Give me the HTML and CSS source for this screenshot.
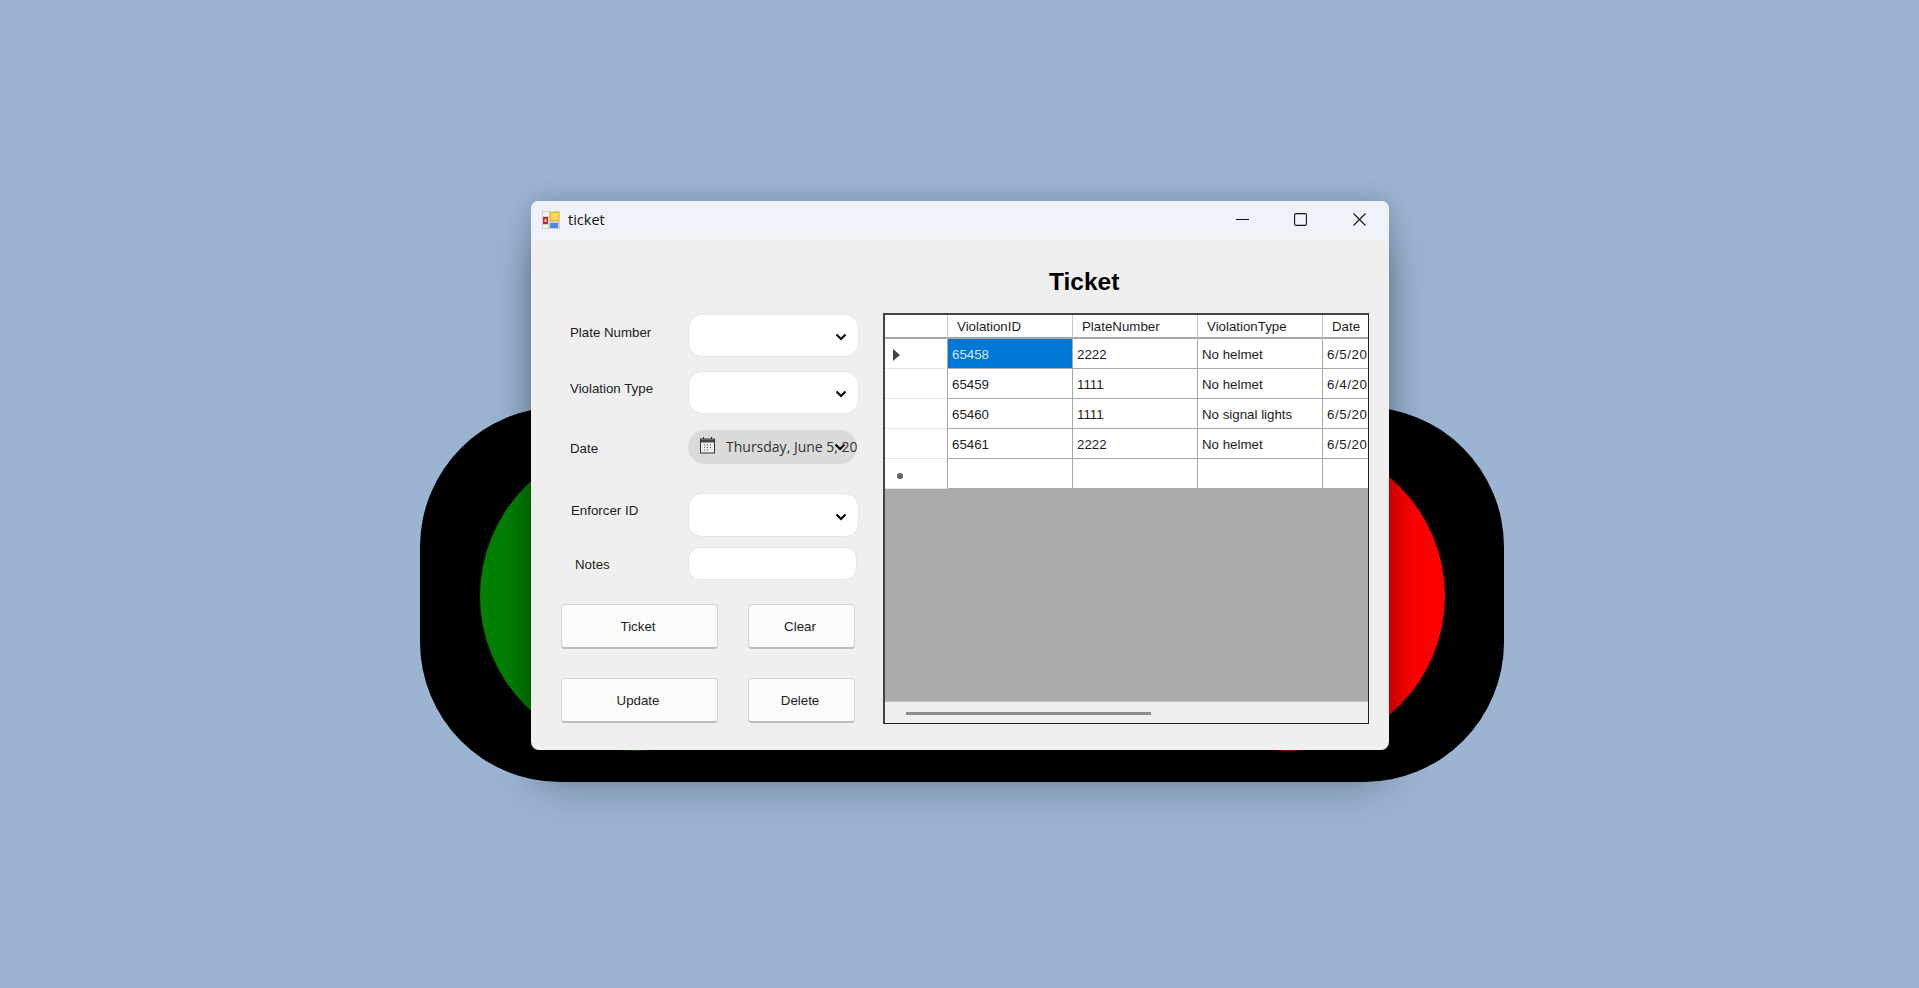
FILE: index.html
```html
<!DOCTYPE html>
<html lang="en">
  <head>
    <meta charset="UTF-8" />
    <title>ticket</title>
    <link rel="stylesheet" href="styles.css">
  </head>
  <body>
    <div class="backdrop">
      <div class="circle circle-green"></div>
      <div class="circle circle-red"></div>
    </div>

    <div class="window">
      <div class="titlebar">
        <svg class="app-icon" width="18" height="18" viewBox="0 0 18 18">
          <rect width="18" height="18" fill="#cfcfcf" />
          <rect x="1" y="1" width="6" height="4" fill="#f4f4f4" />
          <rect x="1" y="6" width="5" height="7" fill="#c8262a" />
          <rect x="2.5" y="8" width="2" height="3" fill="#f2c6c6" />
          <rect x="8" y="1" width="9" height="9" fill="#f0b90f" />
          <rect x="9" y="2" width="7" height="7" fill="#fcd856" />
          <rect x="8" y="12" width="8" height="5" fill="#4d8ce0" />
          <rect x="1" y="14" width="5" height="3" fill="#f4f4f4" />
        </svg>
        <span class="window-title">ticket</span>
        <div class="controls">
          <svg width="13" height="13" viewBox="0 0 13 13"><path d="M0 6.5h13" /></svg>
          <svg width="13" height="13" viewBox="0 0 13 13"><rect x="0.6" y="0.6" width="11.8" height="11.8" rx="1.5" /></svg>
          <svg width="13" height="13" viewBox="0 0 13 13"><path d="M0.5 0.5l12 12M12.5 0.5l-12 12" /></svg>
        </div>
      </div>

      <div class="window-body">
        <form class="ticket-form">
          <div class="row row-plate">
            <label>Plate Number</label>
            <div class="combo">
              <svg class="chevron" width="12" height="8" viewBox="0 0 12 8"><path d="M1.5 1.5L6 6l4.5-4.5" /></svg>
            </div>
          </div>
          <div class="row row-violation">
            <label>Violation Type</label>
            <div class="combo">
              <svg class="chevron" width="12" height="8" viewBox="0 0 12 8"><path d="M1.5 1.5L6 6l4.5-4.5" /></svg>
            </div>
          </div>
          <div class="row row-date">
            <label>Date</label>
            <div class="date-picker">
              <svg class="calendar" width="15" height="17" viewBox="0 0 15 17">
                <path d="M3.5 0v3M11.5 0v3" stroke="#222" fill="none" />
                <rect x="0.5" y="2" width="14" height="14" fill="#eee" stroke="#333" />
                <rect x="1" y="2.5" width="13" height="3" fill="#444" />
                <path d="M4 8h1M7 8h1M10 8h1M4 10.5h1M7 10.5h1M10 10.5h1M4 13h1M7 13h1" stroke="#555" fill="none" />
              </svg>
              <span class="date-text">Thursday, June 5, 2025</span>
              <svg class="chevron" width="12" height="8" viewBox="0 0 12 8"><path d="M1.5 1.5L6 6l4.5-4.5" /></svg>
            </div>
          </div>
          <div class="row row-enforcer">
            <label>Enforcer ID</label>
            <div class="combo">
              <svg class="chevron" width="12" height="8" viewBox="0 0 12 8"><path d="M1.5 1.5L6 6l4.5-4.5" /></svg>
            </div>
          </div>
          <div class="row row-notes">
            <label>Notes</label>
            <input class="notes" type="text" />
          </div>
          <div class="buttons">
            <button type="button">Ticket</button>
            <button type="button">Clear</button>
            <button type="button">Update</button>
            <button type="button">Delete</button>
          </div>
        </form>

        <div class="records">
          <h1>Ticket</h1>
          <div class="grid-view">
            <table>
              <thead>
                <tr><th class="head-cell"></th><th>ViolationID</th><th>PlateNumber</th><th>ViolationType</th><th>Date</th></tr>
              </thead>
              <tbody>
                <tr>
                  <td class="head-cell"><svg width="7" height="12" viewBox="0 0 7 12"><path d="M0 0l7 6-7 6z" fill="#444" /></svg></td>
                  <td class="selected">65458</td><td>2222</td><td>No helmet</td><td>6/5/2025</td>
                </tr>
                <tr><td class="head-cell"></td><td>65459</td><td>1111</td><td>No helmet</td><td>6/4/2025</td></tr>
                <tr><td class="head-cell"></td><td>65460</td><td>1111</td><td>No signal lights</td><td>6/5/2025</td></tr>
                <tr><td class="head-cell"></td><td>65461</td><td>2222</td><td>No helmet</td><td>6/5/2025</td></tr>
                <tr class="new-row">
                  <td class="head-cell"><svg class="new-mark" width="6" height="6" viewBox="0 0 7 7"><path d="M2 0h3l2 2v3l-2 2H2L0 5V2z" fill="#666" /></svg></td>
                  <td></td><td></td><td></td><td></td>
                </tr>
              </tbody>
            </table>
            <div class="empty-area"></div>
            <div class="scrollbar"><div class="thumb"></div></div>
          </div>
        </div>
      </div>
    </div>
  </body>
</html>
```

FILE: styles.css
```css
body {
  margin: 0;
  height: 988px;
  overflow: hidden;
  position: relative;
  background: #9bb4d2;
  font-family: "Liberation Sans", Arial, sans-serif;
  font-size: 13.3px;
  color: #1c1c1c;
}

/* shapes behind the window */
.backdrop {
  position: absolute;
  left: 420px;
  top: 407px;
  width: 1084px;
  height: 375px;
  background: #000;
  border-radius: 140px;
}
.circle {
  position: absolute;
  top: 34px;
  width: 310px;
  height: 310px;
  border-radius: 50%;
}
.circle-green {
  left: 60px;
  background: #008000;
}
.circle-red {
  right: 59px;
  background: #f00;
}

.window {
  position: absolute;
  left: 531px;
  top: 201px;
  width: 858px;
  height: 549px;
  background: #efefef;
  border-radius: 8px;
  overflow: hidden;
  box-shadow: 0 34px 44px -8px rgba(0, 0, 0, 0.45), 0 -2px 24px rgba(0, 0, 0, 0.16);
}
.titlebar {
  height: 38px;
  background: #eff2f9;
  display: flex;
  align-items: center;
  padding-left: 11px;
}
.app-icon {
  margin-top: -1px;
}
.window-title {
  margin-left: 8px;
  margin-top: -1px;
  font-family: "Open Sans", sans-serif;
  font-size: 14.5px;
  color: #111;
}
.controls {
  margin-left: auto;
  margin-right: 23px;
  margin-top: -1px;
  display: flex;
  gap: 45px;
}
.controls svg {
  fill: none;
  stroke: #111;
  stroke-width: 1.1;
}
.controls svg:last-child {
  margin-left: 1px;
}

.window-body {
  display: flex;
  padding-left: 30px;
}

.ticket-form {
  width: 298px;
  padding-top: 75px;
}
.row {
  display: grid;
  grid-template-columns: 127px 1fr;
}
.row label {
  padding-left: 9px;
  line-height: 16px;
}
.row-plate {
  height: 43px;
  margin-bottom: 14px;
}
.row-plate label {
  padding-top: 11px;
}
.row-violation {
  height: 43px;
  margin-bottom: 16px;
}
.row-violation label {
  padding-top: 10px;
}
.row-date {
  height: 34px;
  margin-bottom: 29px;
}
.row-date label {
  padding-top: 11px;
}
.row-enforcer {
  height: 44px;
  margin-bottom: 10px;
}
.row-enforcer label {
  padding-top: 10px;
  padding-left: 10px;
}
.row-notes {
  height: 33px;
  margin-bottom: 24px;
}
.row-notes label {
  padding-top: 10px;
  padding-left: 14px;
}

.combo {
  background: #fff;
  border: 1px solid #e3e5ea;
  border-radius: 14px;
  display: flex;
  justify-content: flex-end;
  align-items: center;
  padding-right: 11px;
  padding-top: 3px;
  box-sizing: border-box;
}
.chevron {
  fill: none;
  stroke: #000;
  stroke-width: 2;
}
.notes {
  margin: 0 2px 0 0;
  padding: 0 10px;
  background: #fff;
  border: 1px solid #e3e5ea;
  border-radius: 12px;
  box-sizing: border-box;
  min-width: 0;
}
.date-picker {
  margin-right: 2px;
  background: #dadada;
  border-radius: 17px;
  display: flex;
  align-items: center;
  padding-left: 12px;
  position: relative;
  overflow: hidden;
  white-space: nowrap;
}
.calendar {
  flex: none;
  margin-top: -3px;
}
.date-text {
  margin-left: 11px;
  margin-top: -1px;
  font-family: "Open Sans", sans-serif;
  font-size: 14px;
  color: #333;
}
.date-picker .chevron {
  position: absolute;
  right: 11px;
  top: 13px;
}

.buttons {
  display: grid;
  grid-template-columns: 157px 107px;
  grid-auto-rows: 45px;
  column-gap: 30px;
  row-gap: 29px;
}
button {
  margin: 0;
  padding: 0 3px 0 0;
  font: inherit;
  color: #1c1c1c;
  background: #fbfbfb;
  border: 1px solid #d4d4d4;
  border-bottom: 2px solid #bcbcbc;
  border-radius: 4px;
}

.records {
  margin-left: 24px;
  width: 486px;
}
h1 {
  margin: 0;
  padding: 28px 0 16px 166px;
  font-size: 24.5px;
  line-height: 30px;
  font-weight: bold;
  color: #000;
}

.grid-view {
  height: 411px;
  box-sizing: border-box;
  border: 1px solid #222;
  border-left: 2px solid #444;
  border-top: 2px solid #444;
  overflow: hidden;
  display: flex;
  flex-direction: column;
  background: #ababab;
}
table {
  border-collapse: separate;
  border-spacing: 0;
  table-layout: fixed;
  width: 483px;
  flex: none;
  background: #fff;
}
th,
td {
  width: 125px;
  box-sizing: border-box;
  padding: 2px 0 0 4px;
  white-space: nowrap;
  overflow: hidden;
  font-weight: normal;
  text-align: left;
  border-right: 1px solid #a8a8a8;
  border-bottom: 1px solid #a8a8a8;
  height: 30px;
  vertical-align: middle;
}
th {
  height: 24px;
  padding: 1px 0 0 9px;
  border-bottom: 2px solid #a8a8a8;
  border-right-color: #c8c8c8;
}
th:first-child,
td:first-child {
  width: 63px;
  padding-left: 8px;
}
th:last-child,
td:last-child {
  border-right: 0;
}
td:last-child {
  letter-spacing: 0.6px;
}
td.head-cell {
  border-bottom-color: #e4e4e4;
  line-height: 0;
}
.new-mark {
  margin: 3px 0 0 4px;
}
td.selected {
  background: #0078d7;
  color: #d5e6f6;
}
.empty-area {
  flex: 1;
}
.scrollbar {
  height: 22px;
  flex: none;
  background: #efefef;
  border-top: 1px solid #c4c4c4;
  box-sizing: border-box;
  padding: 10px 0 0 21px;
}
.thumb {
  width: 245px;
  height: 3px;
  background: #8c8c8c;
}
```
